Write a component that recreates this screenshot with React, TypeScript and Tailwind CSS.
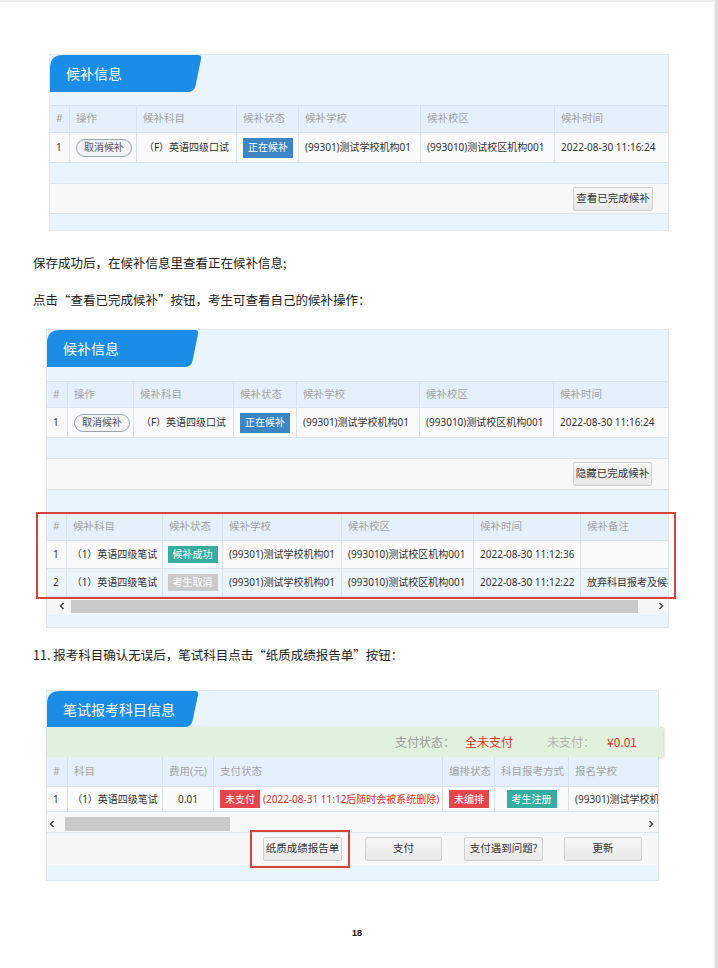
import React from "react";

type Cell = { c: React.ReactNode; center?: boolean };

function Row({ grid, cells, cls, head }: { grid: string; cells: Cell[]; cls: string; head?: boolean }) {
  return (
    <div className={`grid ${grid} ${cls}`}>
      {cells.map((cell, i) => (
        <div
          key={i}
          className={`flex items-center overflow-hidden whitespace-nowrap px-[6px] ${
            i < cells.length - 1 ? "border-r border-[#d5e2ec]" : ""
          } ${cell.center ? "justify-center" : ""} ${head ? "text-[#a3a3a3]" : "text-[#333]"}`}
        >
          {cell.c}
        </div>
      ))}
    </div>
  );
}

function Tab({ label, short }: { label: string; short?: boolean }) {
  return (
    <div className={`relative w-[152px] ${short ? "h-[36px]" : "h-[37px]"}`}>
      <svg className="absolute inset-0" width="152" height={short ? 36 : 37} viewBox={short ? "0 0 152 36" : "0 0 152 37"}>
        <path
          d={short ? "M0 36 V13 Q0 0 13 0 H148 Q152 0 151 4 L145.5 30 Q144 36 137 36 Z" : "M0 37 V13 Q0 0 13 0 H148 Q152 0 151 4 L145.5 31 Q144 37 137 37 Z"}
          fill="#1b8de6"
        />
      </svg>
      <span className={`relative block pl-[16px] text-[14px] text-white [font-family:'Noto_Sans_CJK_SC',sans-serif] ${short ? "leading-[36px]" : "leading-[37px]"}`}>
        {label}
      </span>
    </div>
  );
}

function Badge({ text, color, h }: { text: string; color: string; h: string }) {
  return <span className={`inline-flex items-center px-[5px] text-[10px] text-white ${color} ${h}`}>{text}</span>;
}

function Btn({ text, w }: { text: string; w: string }) {
  return (
    <button
      className={`h-[24px] ${w} flex items-center justify-center rounded-[2px] border border-[#cfcfcf] bg-linear-to-b from-[#f7f7f7] to-[#e8e8e8] text-[10.5px] text-[#333]`}
    >
      {text}
    </button>
  );
}

const ChevL = () => (
  <svg width="6" height="8" viewBox="0 0 6 8">
    <path d="M4.5 1 L1.5 4 L4.5 7" stroke="#444" strokeWidth="1.5" fill="none" />
  </svg>
);
const ChevR = () => (
  <svg width="6" height="8" viewBox="0 0 6 8">
    <path d="M1.5 1 L4.5 4 L1.5 7" stroke="#444" strokeWidth="1.5" fill="none" />
  </svg>
);

const CancelBtn = () => (
  <span className="inline-flex h-[18px] items-center rounded-full border border-[#9aa3a8] bg-[#f3f3f3] px-[7px] text-[10px] text-[#556]">
    取消候补
  </span>
);

const G1 = "grid-cols-[20px_67px_100px_62px_122px_134px_113px]";
const G2 = "grid-cols-[21px_66px_100px_63px_123px_134px_114px]";
const G3 = "grid-cols-[20px_96px_60px_119px_132px_107px_87px]";
const G4 = "grid-cols-[21px_95px_51px_229px_52px_74px_89px]";

const head1: Cell[] = [
  { c: "#" },
  { c: "操作" },
  { c: "候补科目" },
  { c: "候补状态" },
  { c: "候补学校" },
  { c: "候补校区" },
  { c: "候补时间" },
];

const row1: Cell[] = [
  { c: "1" },
  { c: <CancelBtn /> },
  { c: "（F）英语四级口试", center: true },
  { c: <Badge text="正在候补" color="bg-[#3c86c6]" h="h-[20px]" /> },
  { c: "(99301)测试学校机构01" },
  { c: "(993010)测试校区机构001" },
  { c: "2022-08-30 11:16:24" },
];

export default function App() {
  return (
    <div className="relative flex h-[968px] w-[718px] overflow-hidden bg-white [font-family:'Noto_Sans','Noto_Sans_CJK_SC',sans-serif]">
      <div className="flex w-[714px] flex-col border-t-[2px] border-[#ececec]">
        {/* Panel 1 */}
        <div className="ml-[50px] mt-[53px] w-[618px] bg-[#eaf4fc] shadow-[0_0_0_1px_#dde8f1]">
          <Tab label="候补信息" />
          <div className="h-[13px]" />
          <Row grid={G1} cells={head1} head cls="h-[28px] border-y border-[#d5e2ec] bg-[#e5f0fa] text-[10.5px]" />
          <Row grid={G1} cells={row1} cls="h-[30px] border-b border-[#d5e2ec] bg-[#fafafa] text-[10px]" />
          <div className="h-[20px]" />
          <div className="flex h-[31px] items-center justify-end border-y border-[#dbe5ed] bg-[#f8f8f8] pr-[15px]">
            <Btn text="查看已完成候补" w="w-[80px]" />
          </div>
          <div className="h-[16px]" />
        </div>

        <p className="ml-[33px] mt-[23px] text-[12.5px] leading-[20px] text-[#222] [font-family:'Noto_Sans_CJK_SC',sans-serif]">
          保存成功后，在候补信息里查看正在候补信息;
        </p>
        <p className="ml-[33px] mt-[17px] text-[12.5px] leading-[20px] text-[#222] [font-family:'Noto_Sans_CJK_SC',sans-serif]">
          点击“查看已完成候补”按钮，考生可查看自己的候补操作：
        </p>

        {/* Panel 2 */}
        <div className="ml-[47px] mt-[20px] w-[621px] bg-[#eaf4fc] shadow-[0_0_0_1px_#dde8f1]">
          <Tab label="候补信息" />
          <div className="h-[14px]" />
          <Row grid={G2} cells={head1} head cls="h-[27px] border-y border-[#d5e2ec] bg-[#e5f0fa] text-[10.5px]" />
          <Row grid={G2} cells={row1} cls="h-[30px] border-b border-[#d5e2ec] bg-[#fafafa] text-[10px]" />
          <div className="h-[20px]" />
          <div className="flex h-[32px] items-center justify-end border-y border-[#dbe5ed] bg-[#f8f8f8] pr-[16px]">
            <Btn text="隐藏已完成候补" w="w-[79px]" />
          </div>
          <div className="h-[22px]" />
          <Row
            grid={G3}
            head
            cells={[
              { c: "#" },
              { c: "候补科目" },
              { c: "候补状态" },
              { c: "候补学校" },
              { c: "候补校区" },
              { c: "候补时间" },
              { c: "候补备注" },
            ]}
            cls="h-[29px] border-y border-[#d5e2ec] bg-[#e5f0fa] text-[10.5px]"
          />
          <Row
            grid={G3}
            cells={[
              { c: "1" },
              { c: "（1）英语四级笔试", center: true },
              { c: <Badge text="候补成功" color="bg-[#37aca1]" h="h-[17px]" />, center: true },
              { c: "(99301)测试学校机构01" },
              { c: "(993010)测试校区机构001" },
              { c: "2022-08-30 11:12:36" },
              { c: "" },
            ]}
            cls="h-[28px] border-b border-[#d5e2ec] bg-[#fafafa] text-[10px]"
          />
          <Row
            grid={G3}
            cells={[
              { c: "2" },
              { c: "（1）英语四级笔试", center: true },
              { c: <Badge text="考生取消" color="bg-[#cacaca]" h="h-[17px]" />, center: true },
              { c: "(99301)测试学校机构01" },
              { c: "(993010)测试校区机构001" },
              { c: "2022-08-30 11:12:22" },
              { c: "放弃科目报考及候补" },
            ]}
            cls="h-[28px] border-b border-[#d5e2ec] bg-[#edf5fc] text-[10px]"
          />
          <div className="flex h-[18px] items-center bg-[#f6f6f6] pl-[12px] pr-[4px]">
            <ChevL />
            <div className="ml-[6px] h-[13px] w-[567px] bg-[#c9c9c9]" />
            <div className="flex-1" />
            <ChevR />
          </div>
          <div className="h-[12px]" />
        </div>

        <p className="ml-[33px] mt-[18px] text-[12.5px] leading-[20px] text-[#222] [font-family:'Noto_Sans_CJK_SC',sans-serif]">
          11. 报考科目确认无误后，笔试科目点击“纸质成绩报告单”按钮：
        </p>

        {/* Panel 3 */}
        <div className="ml-[47px] mt-[26px] w-[611px] bg-[#eaf4fc] shadow-[0_0_0_1px_#dde8f1]">
          <Tab label="笔试报考科目信息" short />
          <div className="flex h-[30px] w-[616px] items-center justify-end bg-[#e2f1dc] pr-[26px] text-[12px] shadow-[1px_1px_3px_rgba(0,0,0,0.18)] [font-family:'Noto_Sans_CJK_SC',sans-serif]">
            <span className="text-[#9a9a9a]">支付状态：</span>
            <span className="ml-[10px] text-[#e0312c]">全未支付</span>
            <span className="ml-[34px] text-[#b0b0b0]">未支付：</span>
            <span className="ml-[12px] text-[#e0312c]">¥0.01</span>
          </div>
          <Row
            grid={G4}
            head
            cells={[
              { c: "#" },
              { c: "科目" },
              { c: "费用(元)" },
              { c: "支付状态" },
              { c: "编排状态" },
              { c: "科目报考方式" },
              { c: "报名学校" },
            ]}
            cls="h-[30px] border-b border-[#d5e2ec] bg-[#e5f0fa] text-[10.5px]"
          />
          <Row
            grid={G4}
            cells={[
              { c: "1" },
              { c: "（1）英语四级笔试", center: true },
              { c: "0.01", center: true },
              {
                c: (
                  <>
                    <Badge text="未支付" color="bg-[#e5454b]" h="h-[18px]" />
                    <span className="ml-[3px] text-[#d9302c]">(2022-08-31 11:12后随时会被系统删除)</span>
                  </>
                ),
              },
              { c: <Badge text="未编排" color="bg-[#e5454b]" h="h-[18px]" /> },
              { c: <Badge text="考生注册" color="bg-[#37aca1]" h="h-[18px]" />, center: true },
              { c: "(99301)测试学校机构01" },
            ]}
            cls="h-[25px] border-b border-[#d5e2ec] bg-[#fbfbfb] text-[10px]"
          />
          <div className="flex h-[20px] items-end bg-[#f8f8f8] pb-[1px] pl-[2px] pr-[4px]">
            <div className="mb-[3px]">
              <ChevL />
            </div>
            <div className="ml-[10px] h-[14px] w-[165px] bg-[#c9c9c9]" />
            <div className="flex-1" />
            <div className="mb-[3px]">
              <ChevR />
            </div>
          </div>
          <div className="flex h-[33px] items-center border-t border-[#dfe6ec] bg-[#f7f7f7] pl-[216px]">
            <Btn text="纸质成绩报告单" w="w-[79px]" />
            <div className="ml-[23px]">
              <Btn text="支付" w="w-[77px]" />
            </div>
            <div className="ml-[22px]">
              <Btn text="支付遇到问题?" w="w-[79px]" />
            </div>
            <div className="ml-[21px]">
              <Btn text="更新" w="w-[78px]" />
            </div>
          </div>
          <div className="h-[15px]" />
        </div>

        <p className="mt-[47px] text-center text-[9px] font-bold leading-[12px] text-[#111] [font-family:'Liberation_Sans',sans-serif]">
          18
        </p>
      </div>
      <div className="h-full w-[4px] border-l border-[#f2f2f2] bg-[#dfdfdf]" />

      {/* annotation boxes */}
      <div className="absolute left-[36px] top-[512px] h-[87px] w-[640px] border-2 border-[#d7423d]" />
      <div className="absolute left-[250px] top-[830px] h-[38px] w-[100px] border-2 border-[#d7423d]" />
    </div>
  );
}
